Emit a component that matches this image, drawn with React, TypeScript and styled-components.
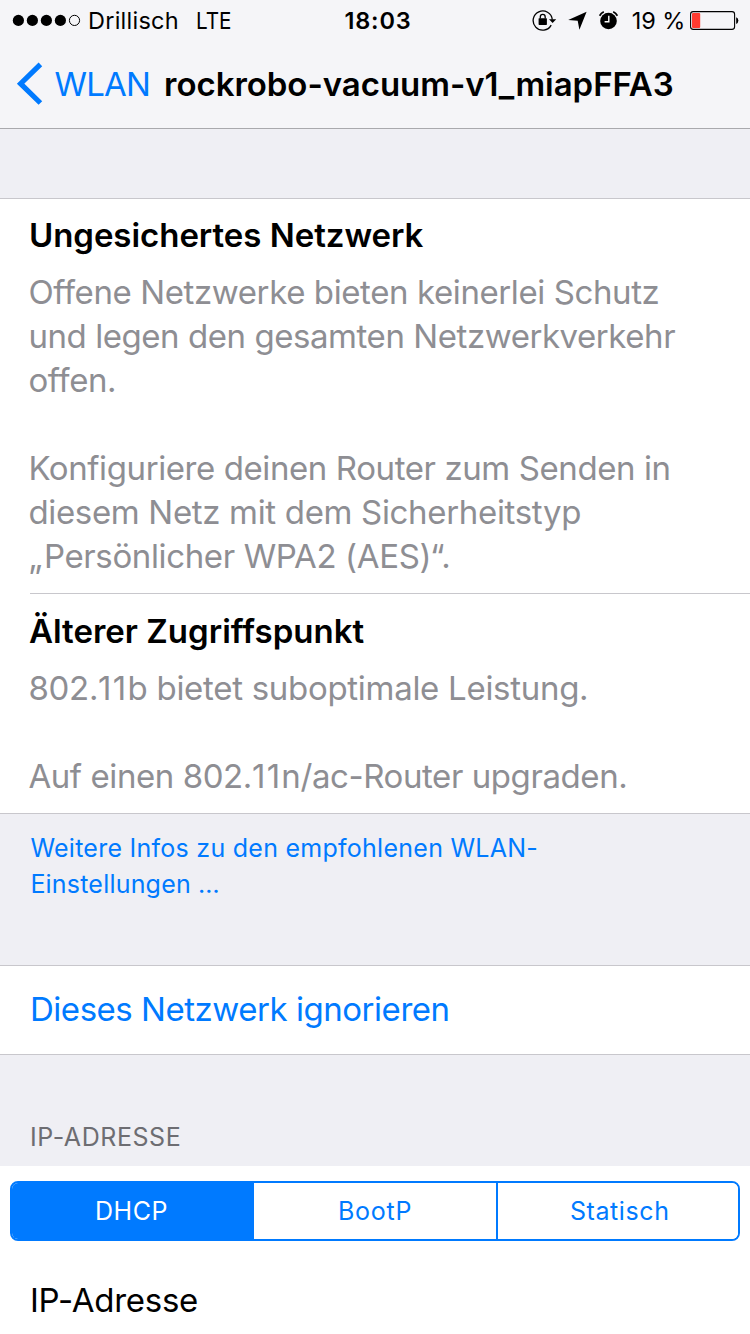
import React from "react";
import styled, { createGlobalStyle, css } from "styled-components";

const color = {
  tint: "#007aff",
  bar: "#f5f5f8",
  group: "#efeff4",
  line: "#c8c7cc",
  barLine: "#a9a9ad",
  detail: "#8e8e93",
  caption: "#6d6d72",
};

const GlobalStyle = createGlobalStyle`
  * { box-sizing: border-box; }
  body {
    margin: 0;
    background: ${color.group};
    font-family: Inter, "Liberation Sans", sans-serif;
    color: #000;
  }
`;

const Screen = styled.main`
  width: 750px;
  height: 1334px;
  overflow: hidden;
  display: flex;
  flex-direction: column;
  background: ${color.group};
`;

const Header = styled.header`
  flex: none;
  height: 129px;
  background: ${color.bar};
  border-bottom: 1px solid ${color.barLine};
`;

const StatusBar = styled.div`
  height: 40px;
  padding: 0 10px 0 12px;
  display: flex;
  align-items: center;
  font-size: 23.5px;
  line-height: 38px;
  white-space: nowrap;
  svg { flex: none; display: block; }
  span { padding-top: 2px; }
`;

const StatusLeft = styled.div`
  flex: 1 1 0;
  display: flex;
  align-items: center;
`;

const StatusRight = styled(StatusLeft)`
  justify-content: flex-end;
  gap: 11px;
`;

const Carrier = styled.span`
  margin-left: 6px;
  letter-spacing: 0.25px;
`;

const Radio = styled.span`
  margin-left: 17px;
  transform: scaleX(0.88);
  transform-origin: left;
`;

const Clock = styled.span`
  padding-left: 4px;
  font-weight: 600;
  letter-spacing: 0.8px;
`;

const Percent = styled.span`
  margin: 0 -6.2px 0 1.3px;
  letter-spacing: -0.1px;
`;

const NavBar = styled.nav`
  height: 88px;
  padding-left: 16px;
  display: flex;
  align-items: center;
  font-size: 33px;
  line-height: 44px;
  white-space: nowrap;
`;

const BackLink = styled.a`
  display: flex;
  align-items: center;
  color: ${color.tint};
  letter-spacing: -0.8px;
  svg { display: block; margin-right: 10.5px; }
`;

const Title = styled.h1`
  margin: 0 0 0 14px;
  font: inherit;
  font-weight: 600;
  letter-spacing: -0.04px;
`;

const Group = styled.section<{ $space?: number; $open?: boolean }>`
  flex: none;
  margin-top: ${(p) => p.$space ?? 0}px;
  background: #fff;
  ${(p) =>
    !p.$open &&
    css`
      border-top: 1px solid ${color.line};
      border-bottom: 1px solid ${color.line};
    `}
`;

const Notice = styled.article<{ $top: number }>`
  padding: ${(p) => p.$top}px 0 15px 28.4px;
`;

const Divider = styled.hr`
  height: 1px;
  margin: 0 0 0 30px;
  border: 0;
  background: ${color.line};
`;

const NoticeTitle = styled.h2<{ $track: number }>`
  margin: 0 0 13px 0.5px;
  font-size: 33px;
  line-height: 44px;
  font-weight: 600;
  letter-spacing: ${(p) => p.$track}px;
`;

const Paragraph = styled.p`
  margin: 0;
  font-size: 33px;
  line-height: 44px;
  color: ${color.detail};
  & + & { margin-top: 44px; }
`;

const Line = styled.span<{ $track: number }>`
  display: block;
  white-space: nowrap;
  letter-spacing: ${(p) => p.$track}px;
`;

const Loose = styled.span<{ $track: number }>`
  letter-spacing: ${(p) => p.$track}px;
`;

const FooterLink = styled.a`
  flex: none;
  padding: 16px 0 0 30.4px;
  font-size: 25px;
  line-height: 36px;
  color: ${color.tint};
`;

const ActionRow = styled.div`
  height: 88px;
  padding: 21px 0 0 30px;
  font-size: 33px;
  line-height: 44px;
  letter-spacing: -0.47px;
  color: ${color.tint};
`;

const SectionCaption = styled.h3`
  flex: none;
  margin: 0;
  padding: 64px 0 11px 30px;
  font-size: 25px;
  line-height: 36px;
  font-weight: 400;
  letter-spacing: 0.55px;
  color: ${color.caption};
`;

const Segments = styled.div`
  height: 60px;
  margin: 0 10px;
  display: grid;
  grid-template-columns: repeat(3, 1fr);
  border: 2px solid ${color.tint};
  border-radius: 8px;
  overflow: hidden;
`;

const Segment = styled.div<{ $active?: boolean; $edge?: boolean; $track: number }>`
  text-align: center;
  font-size: 25px;
  line-height: 56px;
  letter-spacing: ${(p) => p.$track}px;
  color: ${(p) => (p.$active ? "#fff" : color.tint)};
  background: ${(p) => (p.$active ? color.tint : "#fff")};
  ${(p) => p.$active && css`padding-right: 3px;`}
  ${(p) =>
    p.$edge &&
    css`
      padding-left: 3.5px;
      border-left: 2px solid ${color.tint};
    `}
`;

const AddressCell = styled.div`
  height: 168px;
  padding-top: 15px;
`;

const FieldLabel = styled.div`
  margin: 37px 0 0 30px;
  font-size: 33px;
  line-height: 44px;
  letter-spacing: -0.26px;
`;

const SignalDots = () => (
  <svg width="70" height="22" viewBox="12 9 70 22">
    {[18.4, 32.4, 46.4, 60.4].map((x) => (
      <circle key={x} cx={x} cy="20.4" r="5.6" />
    ))}
    <circle cx="74.5" cy="20.4" r="5.1" fill="none" stroke="#000" strokeWidth="1" />
  </svg>
);

const RotationLock = () => (
  <svg width="25" height="22" viewBox="532 9 25 22">
    <path d="M551.2 25.1A9.6 9.6 0 1 1 552.3 19.6" fill="none" stroke="#000" strokeWidth="1.3" />
    <path d="M549 19.2h7.2l-3.6 3.9z" />
    <rect x="538.6" y="18.2" width="8.3" height="6.7" rx="0.6" />
    <path d="M540.3 18.6v-1.7a2.45 2.45 0 0 1 4.9 0v1.7" fill="none" stroke="#000" strokeWidth="1.3" />
  </svg>
);

const LocationArrow = () => (
  <svg width="19" height="22" viewBox="568 9 19 22">
    <path d="M586.6 11.8L579.4 29.8L577.7 20.8L568.2 20.1z" />
  </svg>
);

const AlarmClock = () => (
  <svg width="21" height="22" viewBox="598 9 21 22">
    <circle cx="608.5" cy="21" r="8.3" />
    <path d="M599.6 15.8A10.3 10.3 0 0 1 603.8 11.8M613.2 11.8A10.3 10.3 0 0 1 617.4 15.8" fill="none" stroke="#000" strokeWidth="1.7" />
    <path d="M608.8 15.8v6h-4.2" fill="none" stroke="#fff" strokeWidth="1.4" />
  </svg>
);

const Battery = () => (
  <svg width="50" height="22" viewBox="690 9 50 22">
    <rect x="690.6" y="11.6" width="44" height="17.8" rx="2.6" fill="none" stroke="#000" strokeWidth="1.1" />
    <rect x="692" y="13" width="8.2" height="15" rx="1" fill="#ff3b30" />
    <path d="M736.2 17.3a3.6 3.6 0 0 1 0 6.6z" />
  </svg>
);

const BackChevron = () => (
  <svg width="28" height="44" viewBox="0 0 28 44">
    <path d="M24.4 2.4L4.6 21.7L24.4 41" fill="none" stroke="currentColor" strokeWidth="5.2" />
  </svg>
);

export default function App() {
  return (
    <Screen>
      <GlobalStyle />
      <Header>
        <StatusBar>
          <StatusLeft>
            <SignalDots />
            <Carrier>Drillisch</Carrier>
            <Radio>LTE</Radio>
          </StatusLeft>
          <Clock>18:03</Clock>
          <StatusRight>
            <RotationLock />
            <LocationArrow />
            <AlarmClock />
            <Percent>19 %</Percent>
            <Battery />
          </StatusRight>
        </StatusBar>
        <NavBar>
          <BackLink>
            <BackChevron />
            WLAN
          </BackLink>
          <Title>rockrobo-vacuum-v1_miapFFA3</Title>
        </NavBar>
      </Header>

      <Group $space={69}>
        <Notice $top={14}>
          <NoticeTitle $track={-0.04}>Ungesichertes Netzwerk</NoticeTitle>
          <Paragraph>
            <Line $track={-0.4}>Offene Netzwerke bieten keinerlei Schutz</Line>
            <Line $track={-0.44}>und legen den gesamten Netzwerkverkehr</Line>
            <Line $track={-0.4}>offen.</Line>
          </Paragraph>
          <Paragraph>
            <Line $track={-0.41}>Konfiguriere deinen Router zum Senden in</Line>
            <Line $track={-0.33}>diesem Netz mit dem Sicherheitstyp</Line>
            <Line $track={-0.37}>
              <Loose $track={1.6}>„</Loose>Persönlicher WPA2 (AES)“.
            </Line>
          </Paragraph>
        </Notice>
        <Divider />
        <Notice $top={15}>
          <NoticeTitle $track={0.02}>Älterer Zugriffspunkt</NoticeTitle>
          <Paragraph>
            <Line $track={-0.29}>
              802.<Loose $track={1.3}>11</Loose>b bietet suboptimale Leistung.
            </Line>
          </Paragraph>
          <Paragraph>
            <Line $track={-0.42}>
              Auf einen 802.<Loose $track={1.3}>11</Loose>n/ac-Router upgraden.
            </Line>
          </Paragraph>
        </Notice>
      </Group>
      <FooterLink>
        <Line $track={0.26}>Weitere Infos zu den empfohlenen WLAN-</Line>
        <Line $track={0.2}>Einstellungen …</Line>
      </FooterLink>

      <Group $space={63}>
        <ActionRow>Dieses Netzwerk ignorieren</ActionRow>
      </Group>

      <SectionCaption>IP-ADRESSE</SectionCaption>
      <Group $open>
        <AddressCell>
          <Segments>
            <Segment $active $track={0.5}>DHCP</Segment>
            <Segment $track={0.75}>BootP</Segment>
            <Segment $edge $track={0.58}>Statisch</Segment>
          </Segments>
          <FieldLabel>IP-Adresse</FieldLabel>
        </AddressCell>
      </Group>
    </Screen>
  );
}
